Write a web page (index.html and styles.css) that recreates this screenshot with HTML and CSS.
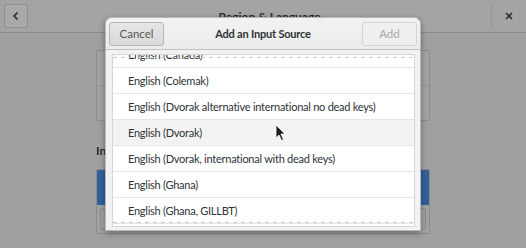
FILE: index.html
```html
<!DOCTYPE html>
<html>
<head>
<meta charset="utf-8">
<link rel="stylesheet" href="styles.css">
</head>
<body>
<div class="window">
  <header class="headerbar">
    <button class="back-btn" aria-label="Back">
      <svg width="10" height="10" viewBox="0 0 10 10"><path d="M6.5 1.5 L3 5 L6.5 8.5" fill="none" stroke="#2b2b2b" stroke-width="1.6"/></svg>
    </button>
    <div class="wtitle">Region &amp; Language</div>
    <div class="hsep"></div>
    <div class="close">
      <svg width="8" height="8" viewBox="0 0 8 8"><path d="M1 1 L7 7 M7 1 L1 7" stroke="#2b2b2b" stroke-width="1.6"/></svg>
    </div>
  </header>
  <main class="wbody">
    <div class="frame">
      <div class="frow"></div>
      <div class="frow"></div>
    </div>
    <div class="section-label">Input Sources</div>
    <div class="frame2">
      <div class="selrow"></div>
      <div class="toolbar">
        <span class="tbtn"></span>
        <span class="tbtn tbtn-right"></span>
      </div>
    </div>
  </main>
</div>

<div class="dialog">
  <div class="dheader">
    <button class="btn">Cancel</button>
    <div class="dtitle">Add an Input Source</div>
    <button class="btn btn-disabled">Add</button>
  </div>
  <div class="dcontent">
    <div class="list">
      <div class="rows">
        <div class="row">English (Canada)</div>
        <div class="row">English (Colemak)</div>
        <div class="row">English (Dvorak alternative international no dead keys)</div>
        <div class="row hover">English (Dvorak)</div>
        <div class="row">English (Dvorak, international with dead keys)</div>
        <div class="row">English (Ghana)</div>
        <div class="row">English (Ghana, GILLBT)</div>
        <div class="row">English (India, with rupee)</div>
      </div>
    </div>
  </div>
</div>

<svg class="cursor" width="12" height="18" viewBox="0 0 12 18">
  <path d="M1 1 L1 14 L4 11 L6.5 16.5 L8.5 15.5 L6 10 L10 10 Z" fill="#1e1e1e" stroke="#ffffff" stroke-width="0.8"/>
</svg>
</body>
</html>
```
FILE: styles.css
```css
* { box-sizing: border-box; }
html, body { margin: 0; padding: 0; }
body {
  width: 526px;
  height: 248px;
  overflow: hidden;
  background: #a0a0a0;
  font-family: "Lato", "Open Sans", sans-serif;
  font-size: 11px;
  color: #2e3436;
  position: relative;
}
button { font-family: inherit; }

.window { width: 526px; height: 248px; }

.headerbar {
  height: 33px;
  display: flex;
  align-items: center;
  padding: 0 4px;
  background: #a4a4a4;
  border-bottom: 1px solid #8b8b8b;
}
.back-btn {
  width: 24px;
  height: 24px;
  border: 1px solid #8e8e8e;
  border-radius: 3px;
  background: #a9a9a9;
  display: flex;
  align-items: center;
  justify-content: center;
  padding: 0;
  flex-shrink: 0;
}
.wtitle {
  flex: 1;
  text-align: center;
  font-weight: bold;
  font-size: 12px;
  color: #2b2b2b;
  padding-left: 20px;
}
.hsep {
  width: 1px;
  height: 24px;
  background: #979797;
  margin-right: 13px;
}
.close {
  width: 8px;
  height: 8px;
  display: flex;
  margin-right: 9px;
}

.wbody {
  padding: 17px 96px 0 96px;
}
.frame {
  height: 71px;
  border: 1px solid #8c8c8c;
  border-radius: 2px;
  background: #a3a3a3;
  display: flex;
  flex-direction: column;
}
.frow { flex: 1; }
.frow + .frow { border-top: 1px solid #939393; }
.section-label {
  margin-top: 22px;
  font-weight: bold;
  font-size: 12px;
  color: #2b2b2b;
  height: 17px;
}
.frame2 {
  margin-top: 9px;
  border: 1px solid #8c8c8c;
  border-radius: 2px;
  overflow: hidden;
}
.selrow {
  height: 35px;
  background: #32619a;
}
.toolbar {
  height: 28px;
  background: #a2a2a2;
  display: flex;
  justify-content: space-between;
  padding: 3px 3px;
}
.tbtn {
  width: 24px;
  border: 1px solid #8c8c8c;
  border-radius: 2px;
}

.dialog {
  position: absolute;
  left: 105px;
  top: 17px;
  width: 316px;
  height: 214px;
  background: #f2f2f2;
  border: 1px solid #b9b9b9;
  border-radius: 7px 7px 0 0;
  box-shadow: 0 2px 6px rgba(0,0,0,0.35);
  display: flex;
  flex-direction: column;
}
.dheader {
  height: 32px;
  flex-shrink: 0;
  display: flex;
  align-items: center;
  justify-content: space-between;
  padding: 0 3px;
  background: linear-gradient(#f2f2f2, #ececec);
  border-bottom: 1px solid #c0c0c0;
  border-radius: 7px 7px 0 0;
}
.btn {
  width: 55px;
  height: 24px;
  border: 1px solid #b5b5b5;
  border-radius: 3px;
  background: linear-gradient(#e6e6e6, #d9d9d9);
  color: #555753;
  font-size: 11.5px;
  padding: 0;
}
.btn-disabled {
  background: #efefef;
  border-color: #d2d2d2;
  color: #a8a8a8;
}
.dtitle {
  font-weight: bold;
  font-size: 11px;
  letter-spacing: -0.2px;
  color: #2e3436;
}
.dcontent {
  flex: 1;
  min-height: 0;
  padding: 4px 5px 3px 6px;
  display: flex;
}
.list {
  flex: 1;
  background: #ffffff;
  border: 1px solid #d6d6d6;
  overflow: hidden;
  position: relative;
}
.list::before, .list::after {
  content: "";
  position: absolute;
  left: 0;
  right: 0;
  height: 1px;
  background: repeating-linear-gradient(90deg, #c9c9c9 0 4px, transparent 4px 8px);
  z-index: 2;
}
.list::before { top: 2px; }
.list::after { bottom: 3px; }
.rows { margin-top: -13px; }
.row {
  height: 26px;
  line-height: 25px;
  padding-left: 15px;
  border-bottom: 1px solid #e6e6e6;
  white-space: nowrap;
  color: #2e3436;
  letter-spacing: -0.25px;
}
.row.hover { background: #f3f3f3; }

.cursor {
  position: absolute;
  left: 275px;
  top: 124px;
}
```
